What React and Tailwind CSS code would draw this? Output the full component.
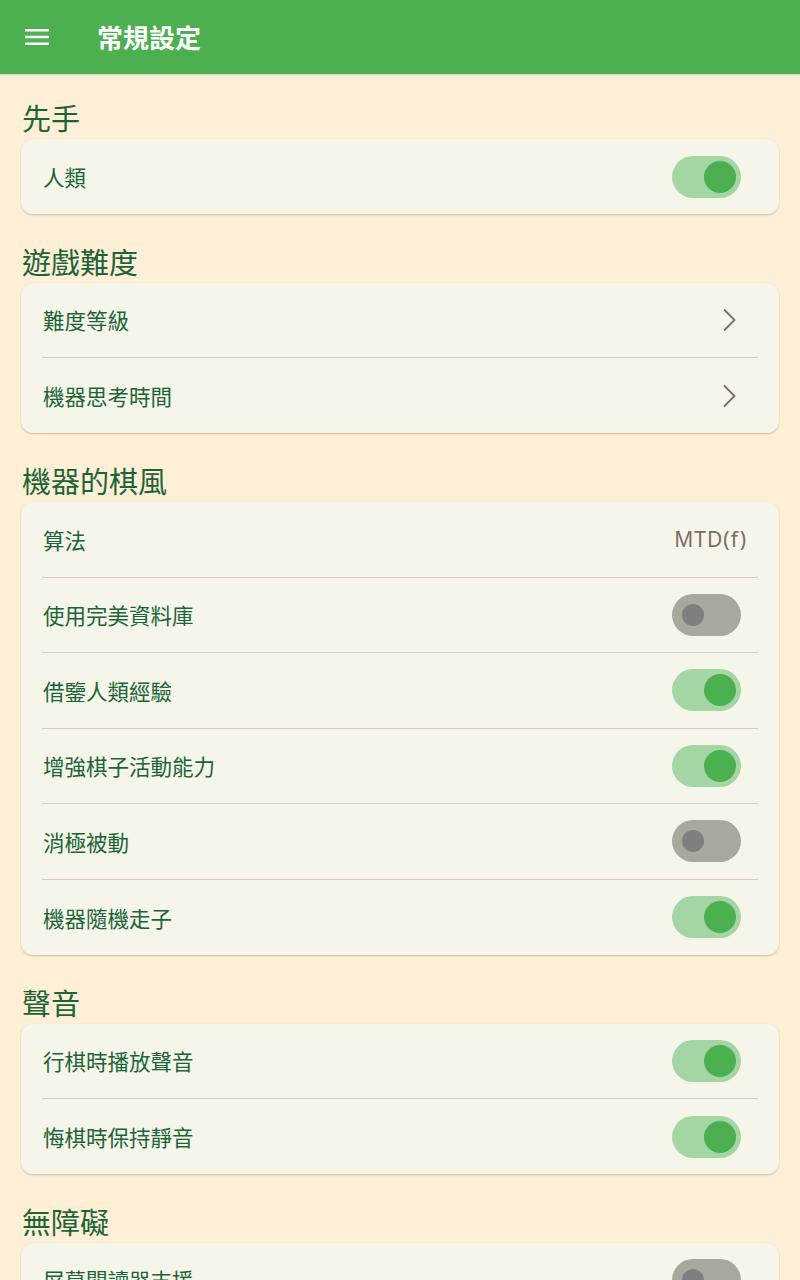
import React from "react";

const font = { fontFamily: '"Noto Sans CJK TC", "Noto Sans", Roboto, sans-serif' };

function Switch({ on }) {
  return on ? (
    <div className="w-[69px] h-[42px] rounded-full bg-[#a3d5a5] flex items-center justify-end pr-[5px]">
      <div className="w-[32px] h-[32px] rounded-full bg-[#4caf50]" />
    </div>
  ) : (
    <div className="w-[69px] h-[42px] rounded-full bg-[#a8a89e] flex items-center pl-[10px]">
      <div className="w-[22px] h-[22px] rounded-full bg-[#7f7f7f]" />
    </div>
  );
}

function Chevron() {
  return (
    <svg width="16" height="24" viewBox="0 0 16 24" className="mr-[3px]">
      <path d="M2 1.5 L12.5 12 L2 22.5" fill="none" stroke="#7d6b66" strokeWidth="1.8" />
    </svg>
  );
}

function Row({ label, right, last, tall }) {
  return (
    <div className="px-[21px]">
      <div
        className={
          (tall ? "h-[75.5px] " : "h-[75px] ") +
          "flex items-center justify-between pl-px pr-[17px] " +
          (last ? "" : "border-b border-[#dcc8be]")
        }
      >
        <span className="text-[21.5px] text-[#1b6438] leading-none">{label}</span>
        {right}
      </div>
    </div>
  );
}

function Section({ title, rows, first, tall }) {
  return (
    <div className={first ? "pt-[25px]" : "pt-[29px]"}>
      <div className="px-[22px] h-[36px] flex items-center text-[29px] text-[#1b6438] leading-none mb-[4px]">
        {title}
      </div>
      <div className="mx-[21px] rounded-[12px] bg-[#f5f5e9] shadow-[0_1px_2px_rgba(120,90,60,0.35)]">
        {rows.map((r, i) => (
          <Row key={i} tall={tall} label={r[0]} right={r[1]} last={i === rows.length - 1} />
        ))}
      </div>
    </div>
  );
}

export default function App() {
  return (
    <div className="w-[800px] h-[1280px] overflow-hidden bg-[#ffefd6]" style={font}>
      <div className="h-[74px] bg-[#4caf50] flex items-center shadow-[0_1px_2px_rgba(0,0,0,0.15)]">
        <div className="w-[97px] flex pl-[25px]">
          <svg width="24" height="18" viewBox="0 0 24 18">
            <rect x="0" y="1" width="24" height="2.5" fill="#fff" />
            <rect x="0" y="7.75" width="24" height="2.5" fill="#fff" />
            <rect x="0" y="14.5" width="24" height="2.5" fill="#fff" />
          </svg>
        </div>
        <span className="text-white text-[26px] font-bold leading-none">常規設定</span>
      </div>
      <Section first title="先手" rows={[["人類", <Switch on />]]} />
      <Section title="遊戲難度" rows={[["難度等級", <Chevron />], ["機器思考時間", <Chevron />]]} />
      <Section
        tall
        title="機器的棋風"
        rows={[
          ["算法", <span className="text-[21px] text-[#7d6b66] tracking-[1px] mr-[-6px]" style={{ fontFamily: '"Noto Sans", Roboto, sans-serif' }}>MTD(f)</span>],
          ["使用完美資料庫", <Switch />],
          ["借鑒人類經驗", <Switch on />],
          ["增強棋子活動能力", <Switch on />],
          ["消極被動", <Switch />],
          ["機器隨機走子", <Switch on />],
        ]}
      />
      <Section title="聲音" rows={[["行棋時播放聲音", <Switch on />], ["悔棋時保持靜音", <Switch on />]]} />
      <Section title="無障礙" rows={[["屏幕閱讀器支援", <Switch />], ["其他", <Switch />]]} />
    </div>
  );
}
